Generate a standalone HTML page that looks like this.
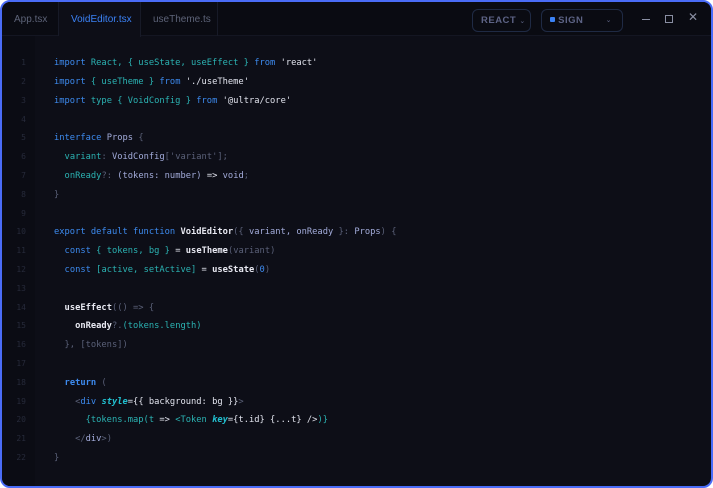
<!DOCTYPE html>
<html><head><meta charset="utf-8"><style>
*{margin:0;padding:0;box-sizing:border-box}
body{width:713px;height:488px;background:#fff;overflow:hidden;font-family:"Liberation Sans",sans-serif}
.win{position:absolute;left:0;top:0;width:713px;height:488px;border:2px solid #4a6cf7;border-radius:10px;background:#0d0e17;overflow:hidden}
.bar{position:absolute;left:0;top:0;right:0;height:34px;background:#0a0b12;border-bottom:1px solid #141622}
.tab{position:absolute;top:0;height:34px;line-height:36px;font-size:10px;color:#5d6378;padding-left:12px;border-right:1px solid #171a27}
.tab.a{background:#0d0e17;color:#3b82f6;height:35px}
.pill{position:absolute;top:7px;height:23px;border:1px solid #1f2a44;border-radius:6px;font-size:9.5px;font-weight:bold;color:#5d6385;letter-spacing:.5px;line-height:21px}
.gut{position:absolute;left:0;top:34px;bottom:0;width:33px;background:#0b0c14}
.ln{position:absolute;left:0;width:26px;text-align:right;font-family:"DejaVu Sans Mono",monospace;font-size:8px;color:#262a3a}
.code{position:absolute;left:54px;font-family:"DejaVu Sans Mono",monospace;font-size:8.75px;color:#5a6078;white-space:pre}
.k{color:#3d8bf0}.t{color:#2bb3b3}.s{color:#e2e4ee}.w{color:#e8e9f2;font-weight:bold}.p{color:#a3acdb}.g{color:#5a6078}.i{color:#22c0d0;font-style:italic;font-weight:bold}
</style></head><body><div class="win">
<div class="bar">
<div class="tab" style="left:0;width:57px">App.tsx</div>
<div class="tab a" style="left:57px;width:82px">VoidEditor.tsx</div>
<div class="tab" style="left:139px;width:77px">useTheme.ts</div>
<div class="pill" style="left:470px;width:59px;padding-left:8px">REACT <span style="font-size:7px;font-weight:normal">⌄</span></div>
<div class="pill" style="left:539px;width:82px;padding-left:8px"><span style="display:inline-block;width:5px;height:5px;background:#3b82f6;border-radius:1px;vertical-align:1px"></span> SIGN<span style="position:absolute;right:10px;font-size:7px;font-weight:normal">⌄</span></div>
<div style="position:absolute;left:640px;top:17px;width:8px;height:1px;background:#8a8fa3"></div>
<div style="position:absolute;left:663px;top:13px;width:8px;height:8px;border:1px solid #8a8fa3"></div>
<div style="position:absolute;left:686px;top:8px;color:#8a8fa3;font-size:12px">✕</div>
</div>
<div class="gut"></div>
</div>
<div style="position:absolute;left:0;top:1px">
<div class="ln" style="top:57px">1</div><div class="ln" style="top:76px">2</div><div class="ln" style="top:95px">3</div><div class="ln" style="top:114px">4</div><div class="ln" style="top:132px">5</div><div class="ln" style="top:151px">6</div><div class="ln" style="top:170px">7</div><div class="ln" style="top:189px">8</div><div class="ln" style="top:208px">9</div><div class="ln" style="top:226px">10</div><div class="ln" style="top:245px">11</div><div class="ln" style="top:264px">12</div><div class="ln" style="top:283px">13</div><div class="ln" style="top:302px">14</div><div class="ln" style="top:320px">15</div><div class="ln" style="top:339px">16</div><div class="ln" style="top:358px">17</div><div class="ln" style="top:377px">18</div><div class="ln" style="top:396px">19</div><div class="ln" style="top:414px">20</div><div class="ln" style="top:433px">21</div><div class="ln" style="top:452px">22</div>
</div>
<div style="position:absolute;left:0;top:3px">
<div class="code" style="top:55px"><span class="k">import</span> <span class="t">React, { useState, useEffect }</span> <span class="k">from</span> <span class="s">'react'</span></div>
<div class="code" style="top:74px"><span class="k">import</span> <span class="t">{ useTheme }</span> <span class="k">from</span> <span class="s">'./useTheme'</span></div>
<div class="code" style="top:93px"><span class="k">import</span> <span class="t">type { VoidConfig }</span> <span class="k">from</span> <span class="s">'@ultra/core'</span></div>
<div class="code" style="top:130px"><span class="k">interface</span> <span class="p">Props</span> {</div>
<div class="code" style="top:149px">  <span class="t">variant</span>: <span class="p">VoidConfig</span>['variant'];</div>
<div class="code" style="top:168px">  <span class="t">onReady</span>?: <span class="p">(tokens: number)</span> <span class="s">=&gt;</span> <span class="p">void</span>;</div>
<div class="code" style="top:187px">}</div>
<div class="code" style="top:224px"><span class="k">export default function</span> <span class="w">VoidEditor</span>({ <span class="p">variant, onReady</span> }: <span class="p">Props</span>) {</div>
<div class="code" style="top:243px">  <span class="k">const</span> <span class="t">{ tokens, bg }</span> <span class="s">=</span> <span class="w">useTheme</span>(variant)</div>
<div class="code" style="top:262px">  <span class="k">const</span> <span class="t">[active, setActive]</span> <span class="s">=</span> <span class="w">useState</span>(<span class="k">0</span>)</div>
<div class="code" style="top:300px">  <span class="w">useEffect</span>(() =&gt; {</div>
<div class="code" style="top:318px">    <span class="w">onReady</span>?.<span class="t">(tokens.length)</span></div>
<div class="code" style="top:337px">  }, [tokens])</div>
<div class="code" style="top:375px">  <span class="k" style="font-weight:bold">return</span> (</div>
<div class="code" style="top:394px">    &lt;<span class="k">div</span> <span class="i">style</span><span class="s">={{ background: bg }}</span>&gt;</div>
<div class="code" style="top:412px">      <span class="t">{tokens.map(t <span class="s">=&gt;</span> &lt;Token <span class="i">key</span><span class="s">={t.id} {...t} /&gt;</span>)}</span></div>
<div class="code" style="top:431px">    &lt;/<span class="p">div</span>&gt;)</div>
<div class="code" style="top:450px">}</div>
</div>
</body></html>
